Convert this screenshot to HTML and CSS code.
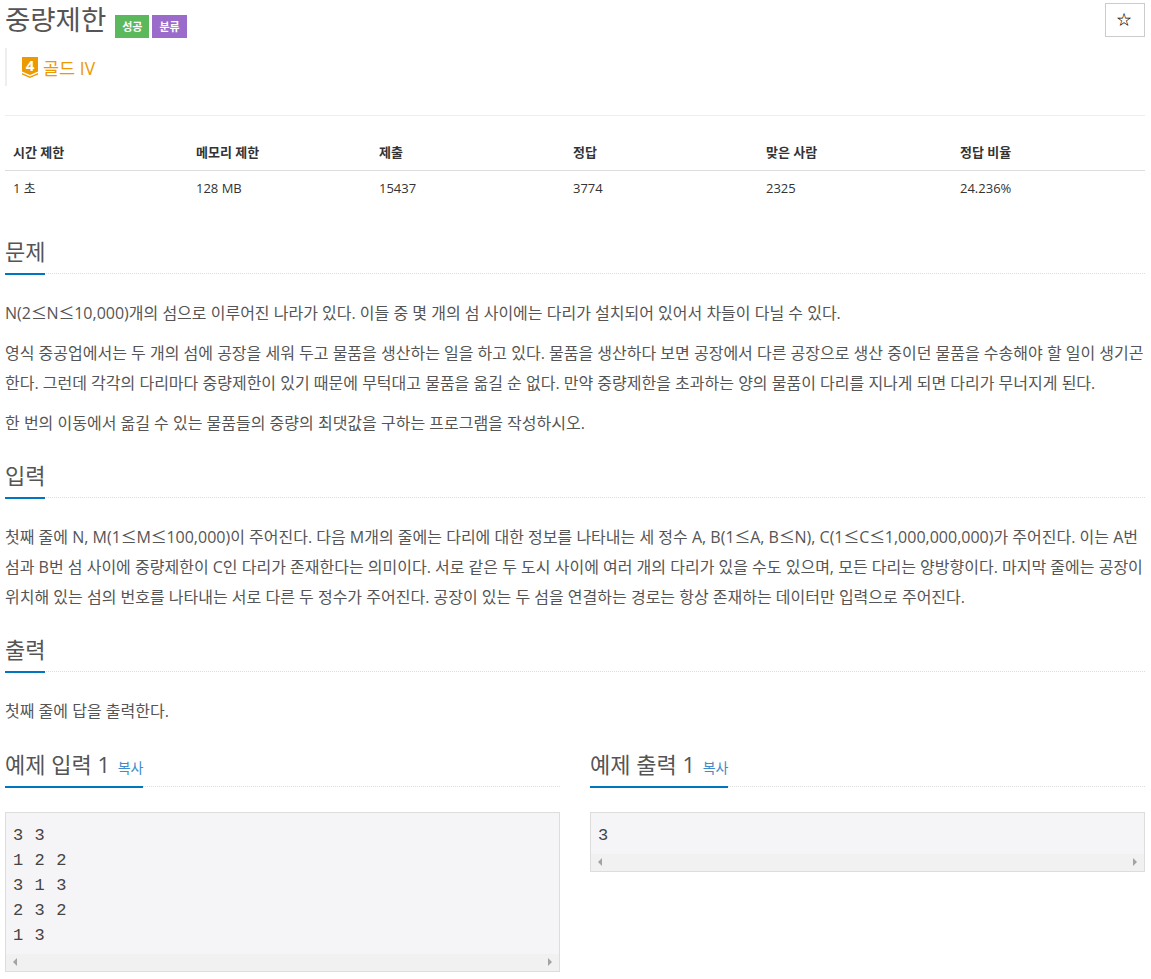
FILE: index.html
```html
<!DOCTYPE html>
<html lang="ko">
<head>
  <meta charset="UTF-8">
  <title>중량제한</title>
  <link rel="stylesheet" href="styles.css">
</head>
<body>

<div class="page-header">
  <div class="title-row">
    <h1>중량제한</h1>
    <span class="label label-success">성공</span>
    <span class="label label-purple">분류</span>
  </div>
  <button class="star-btn">☆</button>
</div>

<blockquote class="tier">
  <svg class="tier-icon" viewBox="0 0 16 21" width="16" height="21">
    <path d="M0 0H16V14.5L8 18L0 14.5Z" fill="#ec9a00"/>
    <path d="M0 16L8 19.5L16 16V17.5L8 21L0 17.5Z" fill="#ec9a00"/>
    <text x="8" y="13.5" class="tier-num">4</text>
  </svg>
  <span class="tier-name">골드 IV</span>
</blockquote>

<table class="info">
  <thead>
    <tr>
      <th class="c1">시간 제한</th>
      <th class="c2">메모리 제한</th>
      <th class="c3">제출</th>
      <th class="c4">정답</th>
      <th class="c5">맞은 사람</th>
      <th>정답 비율</th>
    </tr>
  </thead>
  <tbody>
    <tr>
      <td>1 초</td>
      <td>128 MB</td>
      <td>15437</td>
      <td>3774</td>
      <td>2325</td>
      <td>24.236%</td>
    </tr>
  </tbody>
</table>

<section class="section">
  <div class="headline"><h2>문제</h2></div>
  <p>N(2<span class="le">≤</span>N<span class="le">≤</span>10,000)개의 섬으로 이루어진 나라가 있다. 이들 중 몇 개의 섬 사이에는 다리가 설치되어 있어서 차들이 다닐 수 있다.</p>
  <p>영식 중공업에서는 두 개의 섬에 공장을 세워 두고 물품을 생산하는 일을 하고 있다. 물품을 생산하다 보면 공장에서 다른 공장으로 생산 중이던 물품을 수송해야 할 일이 생기곤 한다. 그런데 각각의 다리마다 중량제한이 있기 때문에 무턱대고 물품을 옮길 순 없다. 만약 중량제한을 초과하는 양의 물품이 다리를 지나게 되면 다리가 무너지게 된다.</p>
  <p>한 번의 이동에서 옮길 수 있는 물품들의 중량의 최댓값을 구하는 프로그램을 작성하시오.</p>
</section>

<section class="section">
  <div class="headline"><h2>입력</h2></div>
  <p>첫째 줄에 N, M(1<span class="le">≤</span>M<span class="le">≤</span>100,000)이 주어진다. 다음 M개의 줄에는 다리에 대한 정보를 나타내는 세 정수 A, B(1<span class="le">≤</span>A, B<span class="le">≤</span>N), C(1<span class="le">≤</span>C<span class="le">≤</span>1,000,000,000)가 주어진다. 이는 A번 <span>섬과 B번 섬 사이에 중량제한이 C인 다리가 존재한다는 의미이다. 서로 같은 두 도시 사이에 여러 개의 다리가 있을 수도 있으며, 모든 다리는 양방향이다. 마지막 줄에는 공장이 위치해 있는 섬의 번호를 나타내는 서로 다른 두 정수가 주어진다. 공장이 있는 두 섬을 연결하는 경로는 항상 존재하는 데이터만 입력으로 주어진다.</span></p>
</section>

<section class="section">
  <div class="headline"><h2>출력</h2></div>
  <p>첫째 줄에 답을 출력한다.</p>
</section>

<div class="samples">
  <div class="sample">
    <div class="headline"><h2>예제 입력 1 <a class="copy">복사</a></h2></div>
    <div class="sample-box">
      <pre>3 3
1 2 2
3 1 3
2 3 2
1 3</pre>
      <div class="scrollbar"><i class="arrow-left"></i><i class="arrow-right"></i></div>
    </div>
  </div>
  <div class="sample">
    <div class="headline"><h2>예제 출력 1 <a class="copy">복사</a></h2></div>
    <div class="sample-box">
      <pre>3</pre>
      <div class="scrollbar"><i class="arrow-left"></i><i class="arrow-right"></i></div>
    </div>
  </div>
</div>

</body>
</html>
```
FILE: styles.css
```css
body {
  font-family: "Open Sans", "Noto Sans CJK KR", sans-serif;
  font-size: 14px;
  color: #333;
  margin: 0;
  padding: 3px 6px 0 5px;
  background-color: #fff;
}

.page-header {
  display: flex;
  justify-content: space-between;
  align-items: flex-start;
}

.title-row {
  display: flex;
  align-items: flex-end;
  gap: 3px;
}

h1 {
  font-size: 27.5px;
  font-weight: 400;
  line-height: 33px;
  margin: 0 6px 2px 0;
  color: #555;
}

.label {
  font-size: 11px;
  font-weight: 700;
  line-height: 23px;
  height: 23px;
  padding: 0 7px;
  color: #fff;
}

.label-success {
  background-color: #5cb85c;
}

.label-purple {
  background-color: #9b6bcc;
}

.star-btn {
  width: 40px;
  height: 34px;
  padding: 0 2px 0 0;
  font-size: 16px;
  color: #000;
  background: #fff;
  border: 1px solid #ccc;
}

.tier {
  display: flex;
  align-items: center;
  gap: 5px;
  height: 38px;
  margin: 10px 0 0;
  padding-left: 15px;
  border-left: 2px solid #eee;
}

.tier-icon {
  flex: none;
  overflow: visible;
}

.tier-num {
  font-size: 15px;
  font-weight: 700;
  fill: #fff;
  text-anchor: middle;
}

.tier-name {
  font-size: 17.5px;
  color: #ec9a00;
}

.info {
  width: 100%;
  margin-top: 29px;
  margin-bottom: 29px;
  border-collapse: collapse;
  border-top: 1px solid #eee;
  font-size: 13px;
}

.info th {
  height: 55px;
  padding: 0 8px 9px;
  text-align: left;
  vertical-align: bottom;
  box-sizing: border-box;
  border-bottom: 1px solid #ddd;
}

.info td {
  height: 36px;
  padding: 0 8px 2px;
  box-sizing: border-box;
}

.c1 { width: 183px; }
.c2 { width: 183px; }
.c3 { width: 194px; }
.c4 { width: 193px; }
.c5 { width: 194px; }

.section {
  margin-top: 22px;
}

.headline {
  border-bottom: 1px dotted #ddd;
  margin-bottom: 24px;
}

.headline h2 {
  display: inline-block;
  font-size: 22px;
  font-weight: 400;
  line-height: 31px;
  margin: 0 0 -2px;
  padding-bottom: 6px;
  color: #555;
  border-bottom: 2px solid #0076c0;
}

p {
  font-size: 16px;
  line-height: 30px;
  margin: 0 0 10px;
  color: #555;
}

/* the inequality sign is drawn wider than the text font's */
.le {
  line-height: 1;
  letter-spacing: -0.4px;
  font-family: "Noto Sans CJK KR", sans-serif;
}

.samples {
  display: flex;
  gap: 30px;
  margin-top: 23px;
}

.sample {
  flex: 1;
  min-width: 0;
}

.sample .headline {
  margin-bottom: 25px;
}

.copy {
  font-size: 14px;
  line-height: 1;
  margin-left: 2px;
  color: #428bca;
}

.sample-box {
  border: 1px solid #ddd;
  background-color: #f5f5f7;
}

pre {
  font-family: "Liberation Mono", monospace;
  font-size: 17px;
  letter-spacing: 0.6px;
  line-height: 25px;
  color: #444;
  margin: 0;
  padding: 10px 7px 6px;
}

.scrollbar {
  display: flex;
  justify-content: space-between;
  align-items: center;
  height: 17px;
  padding: 0 7px;
  background-color: #f1f1f1;
}

.arrow-left {
  border: 4px solid transparent;
  border-left-width: 0;
  border-right-color: #a3a3a3;
}

.arrow-right {
  border: 4px solid transparent;
  border-right-width: 0;
  border-left-color: #a3a3a3;
}
```
